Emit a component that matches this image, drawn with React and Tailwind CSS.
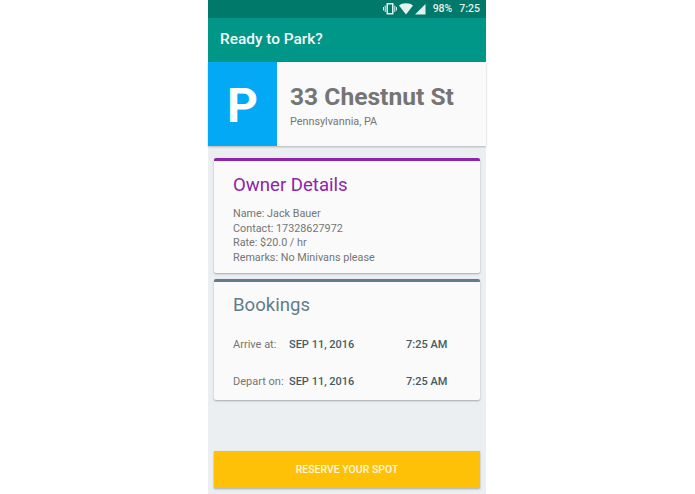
import React from "react";

function StatusIcons() {
  return (
    <svg width="44" height="14" viewBox="0 0 44 14" className="block">
      <g fill="#e4f1ee">
        <path d="M3.500 1h7v11.500h-7z M5 2.500v8.500h4V2.500z" fillRule="evenodd" />
        <rect x="1.700" y="3.500" width="1" height="6.500" />
        <rect x="0" y="5" width="1" height="3.500" />
        <rect x="11.300" y="3.500" width="1" height="6.500" />
        <rect x="13" y="5" width="1" height="3.500" />
        <path d="M16 3.500C17.800 2 20 1.200 23 1.200s5.200.8 7 2.300L23 12.500z" />
        <path d="M32 12.500L42.500 2v10.500z" />
      </g>
    </svg>
  );
}

function BookingRow({ label, date, time, className }) {
  return (
    <div className={`flex items-center text-[11px] leading-[14px] ${className}`}>
      <span className="w-[56px] text-[#757575]">{label}</span>
      <span className="w-[117px] font-medium text-[#455a64]">{date}</span>
      <span className="font-medium text-[#455a64]">{time}</span>
    </div>
  );
}

export default function App() {
  return (
    <div className="h-[494px] w-[695px] overflow-hidden bg-white pl-[208px] font-['Roboto',sans-serif]">
      <div className="flex h-full w-[278px] flex-col bg-[#eceff1]">
        <div className="flex h-[18px] items-center justify-end bg-[#00796b] pr-[6px] text-[10.5px] font-medium text-[#e4f1ee]">
          <StatusIcons />
          <span className="ml-[6px]">98%</span>
          <span className="ml-[7px]">7:25</span>
        </div>
        <div className="flex h-[44px] items-center bg-[#009688] pl-[12px] text-[15.400px] font-medium text-[#f4faf9]">
          Ready to Park?
        </div>
        <div className="flex h-[84px] bg-[#fafafa] shadow-[0_1px_2px_rgba(0,0,0,0.25)]">
          <div className="flex w-[69px] items-center justify-center bg-[#03a9f4] pt-[3px] text-[48px] font-bold leading-none text-white">
            P
          </div>
          <div className="pl-[13px] pt-[19px]">
            <div className="text-[24.600px] font-bold leading-[32px] text-[#757575]">33 Chestnut St</div>
            <div className="mt-[1px] text-[10.800px] leading-[16px] text-[#757575]">Pennsylvannia, PA</div>
          </div>
        </div>
        <div className="mx-[6px] mt-[12px] h-[115px] rounded-[2px] border-t-[3px] border-[#8e24aa] bg-[#fafafa] pl-[19px] pt-[12px] shadow-[0_1px_2px_rgba(0,0,0,0.3)]">
          <div className="text-[18.600px] leading-[24px] text-[#8e24aa]">Owner Details</div>
          <div className="mt-[10px] text-[10.800px] leading-[14.700px] text-[#757575]">
            <div>Name: Jack Bauer</div>
            <div>Contact: 17328627972</div>
            <div>Rate: $20.0 / hr</div>
            <div>Remarks: No Minivans please</div>
          </div>
        </div>
        <div className="mx-[6px] mt-[6px] h-[121px] rounded-[2px] border-t-[3px] border-[#607d8b] bg-[#fafafa] pl-[19px] pt-[11px] shadow-[0_1px_2px_rgba(0,0,0,0.3)]">
          <div className="text-[18.600px] leading-[24px] text-[#607d8b]">Bookings</div>
          <BookingRow className="mt-[21px]" label="Arrive at:" date="SEP 11, 2016" time="7:25 AM" />
          <BookingRow className="mt-[23px]" label="Depart on:" date="SEP 11, 2016" time="7:25 AM" />
        </div>
        <button className="mx-[6px] mt-[51px] flex h-[37px] items-center justify-center bg-[#ffc107] text-[10.500px] font-medium text-[#fdf6e0] shadow-[0_1px_2px_rgba(0,0,0,0.3)]">
          RESERVE YOUR SPOT
        </button>
      </div>
    </div>
  );
}
